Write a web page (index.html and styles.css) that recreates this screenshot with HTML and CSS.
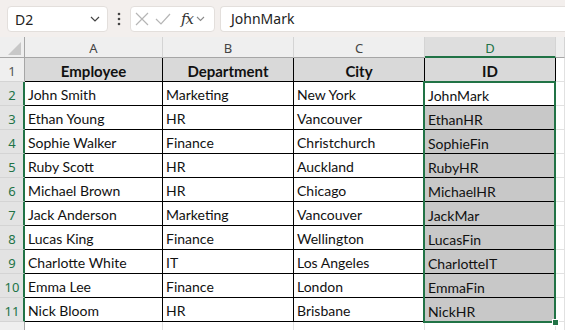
FILE: index.html
```html
<!DOCTYPE html>
<html lang="en">

<head>
    <meta charset="UTF-8">
    <title>Employee IDs</title>
    <link rel="stylesheet" href="styles.css">
</head>

<body>
    <div id="toolbar">
        <div class="namebox">
            <span>D2</span>
            <svg width="10" height="6" viewBox="0 0 10 6"><path d="M1 1l4 4 4-4" fill="none" stroke="#444" stroke-width="1.2"/></svg>
        </div>
        <svg class="dots" width="4" height="14" viewBox="0 0 4 14"><circle cx="2" cy="2" r="1.3" fill="#444"/><circle cx="2" cy="7" r="1.3" fill="#444"/><circle cx="2" cy="12" r="1.3" fill="#444"/></svg>
        <div class="fnbox">
            <svg width="14" height="14" viewBox="0 0 14 14"><path d="M1 1l12 12M13 1L1 13" stroke="#b5b5b5" stroke-width="1.2"/></svg>
            <svg width="16" height="12" viewBox="0 0 16 12"><path d="M1 6l5 5 9-10" fill="none" stroke="#b5b5b5" stroke-width="1.2"/></svg>
            <span class="fx">fx</span>
            <svg width="9" height="6" viewBox="0 0 9 6"><path d="M1 1l3.5 3.5L8 1" fill="none" stroke="#8a8a8a" stroke-width="1.1"/></svg>
        </div>
        <div class="formula">JohnMark</div>
    </div>

    <div id="sheet">
        <div class="corner"><div class="tri"></div></div>
        <div class="hd">A</div>
        <div class="hd">B</div>
        <div class="hd">C</div>
        <div class="hd on">D</div>
        <div class="hd"></div>

        <div class="rh">1</div>
        <div class="tb th">Employee</div>
        <div class="tb th">Department</div>
        <div class="tb th">City</div>
        <div class="tb th">ID</div>
        <div class="gc"></div>

        <div class="rh on">2</div>
        <div class="tb">John Smith</div>
        <div class="tb">Marketing</div>
        <div class="tb">New York</div>
        <div class="tb id">JohnMark</div>
        <div class="gc"></div>

        <div class="rh on">3</div>
        <div class="tb">Ethan Young</div>
        <div class="tb">HR</div>
        <div class="tb">Vancouver</div>
        <div class="tb id sel">EthanHR</div>
        <div class="gc"></div>

        <div class="rh on">4</div>
        <div class="tb">Sophie Walker</div>
        <div class="tb">Finance</div>
        <div class="tb">Christchurch</div>
        <div class="tb id sel">SophieFin</div>
        <div class="gc"></div>

        <div class="rh on">5</div>
        <div class="tb">Ruby Scott</div>
        <div class="tb">HR</div>
        <div class="tb">Auckland</div>
        <div class="tb id sel">RubyHR</div>
        <div class="gc"></div>

        <div class="rh on">6</div>
        <div class="tb">Michael Brown</div>
        <div class="tb">HR</div>
        <div class="tb">Chicago</div>
        <div class="tb id sel">MichaelHR</div>
        <div class="gc"></div>

        <div class="rh on">7</div>
        <div class="tb">Jack Anderson</div>
        <div class="tb">Marketing</div>
        <div class="tb">Vancouver</div>
        <div class="tb id sel">JackMar</div>
        <div class="gc"></div>

        <div class="rh on">8</div>
        <div class="tb">Lucas King</div>
        <div class="tb">Finance</div>
        <div class="tb">Wellington</div>
        <div class="tb id sel">LucasFin</div>
        <div class="gc"></div>

        <div class="rh on">9</div>
        <div class="tb">Charlotte White</div>
        <div class="tb">IT</div>
        <div class="tb">Los Angeles</div>
        <div class="tb id sel">CharlotteIT</div>
        <div class="gc"></div>

        <div class="rh on">10</div>
        <div class="tb">Emma Lee</div>
        <div class="tb">Finance</div>
        <div class="tb">London</div>
        <div class="tb id sel">EmmaFin</div>
        <div class="gc"></div>

        <div class="rh on">11</div>
        <div class="tb">Nick Bloom</div>
        <div class="tb">HR</div>
        <div class="tb">Brisbane</div>
        <div class="tb id sel">NickHR</div>
        <div class="gc"></div>

        <div class="rh"></div>
        <div class="gc"></div>
        <div class="gc"></div>
        <div class="gc"></div>
        <div class="gc"></div>
        <div class="gc"></div>

        <div class="selection"><div class="handle"></div></div>
    </div>
</body>

</html>
```

FILE: styles.css
```css
* {
    box-sizing: border-box;
}

html,
body {
    margin: 0;
    height: 100%;
    overflow: hidden;
    background-color: white;
    font-family: "Noto Sans", "Open Sans", sans-serif;
}

#toolbar {
    height: 37px;
    background-color: #f3efed;
    display: flex;
    align-items: flex-start;
    padding: 6px 0 0 7px;
}

.namebox {
    width: 101px;
    height: 26px;
    background-color: white;
    border: 1px solid #e3dfdc;
    border-radius: 4px;
    display: flex;
    align-items: center;
    justify-content: space-between;
    padding: 0 7px 0 7px;
    font-size: 14px;
    color: #222;
}

.dots {
    margin: 6px 9px 0 9px;
}

.fnbox {
    width: 85px;
    height: 26px;
    background-color: white;
    border: 1px solid #e3dfdc;
    border-radius: 4px;
    display: flex;
    align-items: center;
    padding: 0 0 0 4px;
    gap: 6px;
}

.fnbox .fx {
    font-family: "DejaVu Serif", "Liberation Serif", serif;
    font-style: italic;
    font-size: 15px;
    color: #333;
    margin-left: 4px;
    margin-right: -3px;
    letter-spacing: -1px;
}

.formula {
    flex: 1;
    height: 26px;
    margin-left: 5px;
    background-color: white;
    border: 1px solid #e3dfdc;
    border-right: none;
    border-radius: 4px 0 0 4px;
    padding: 2px 0 0 10px;
    font-size: 14px;
    color: #222;
}

#sheet {
    position: relative;
    display: grid;
    grid-template-columns: 25px 138px 131px 131px 131px 1fr;
    grid-template-rows: 21px repeat(12, 24px);
    font-family: "Lato", "Liberation Sans", sans-serif;
    font-size: 14px;
    color: #111;
}

.corner {
    position: relative;
    background-color: #efefef;
    border-right: 1px solid #a6a6a6;
    border-bottom: 1px solid #a6a6a6;
}

.tri {
    position: absolute;
    right: 3px;
    bottom: 2px;
    width: 0;
    height: 0;
    border-left: 13px solid transparent;
    border-bottom: 13px solid #c8c8c8;
}

.hd {
    background-color: #efefef;
    border-right: 1px solid #d4d4d4;
    border-bottom: 1px solid #a6a6a6;
    display: flex;
    align-items: center;
    justify-content: center;
    font-family: "Noto Sans", "Open Sans", sans-serif;
    font-size: 13px;
    color: #444;
    padding-top: 2px;
}

.hd.on {
    background-color: #dedede;
    border-bottom: 2px solid #217346;
    color: #217346;
    padding-top: 3px;
}

.rh {
    background-color: #efefef;
    border-right: 1px solid #a6a6a6;
    border-bottom: 1px solid #d4d4d4;
    display: flex;
    align-items: flex-end;
    justify-content: center;
    font-family: "Noto Sans", "Open Sans", sans-serif;
    font-size: 13px;
    line-height: 18px;
    color: #555;
    padding-bottom: 1px;
}

.rh.on {
    background-color: #e3e3e3;
    border-right: 2px solid #217346;
    color: #217346;
    padding-left: 1px;
}

.gc {
    border-right: 1px solid #e1e1e1;
    border-bottom: 1px solid #e1e1e1;
}

.tb {
    border-right: 1px solid black;
    border-bottom: 1px solid black;
    display: flex;
    align-items: flex-end;
    padding: 0 3px 1px 3px;
    line-height: 18px;
    white-space: nowrap;
    overflow: hidden;
}

.th {
    background-color: #d9d9d9;
    justify-content: center;
    font-weight: bold;
    font-size: 15px;
}

.id {
    padding-left: 3px;
    padding-bottom: 0;
}

.sel {
    background-color: #c8c8c8;
}

.selection {
    position: absolute;
    left: 423px;
    top: 44px;
    width: 133px;
    height: 242px;
    border: 2px solid #217346;
}

.handle {
    position: absolute;
    right: -5px;
    bottom: -5px;
    width: 7px;
    height: 7px;
    background-color: #217346;
    border: 1px solid white;
}
```
